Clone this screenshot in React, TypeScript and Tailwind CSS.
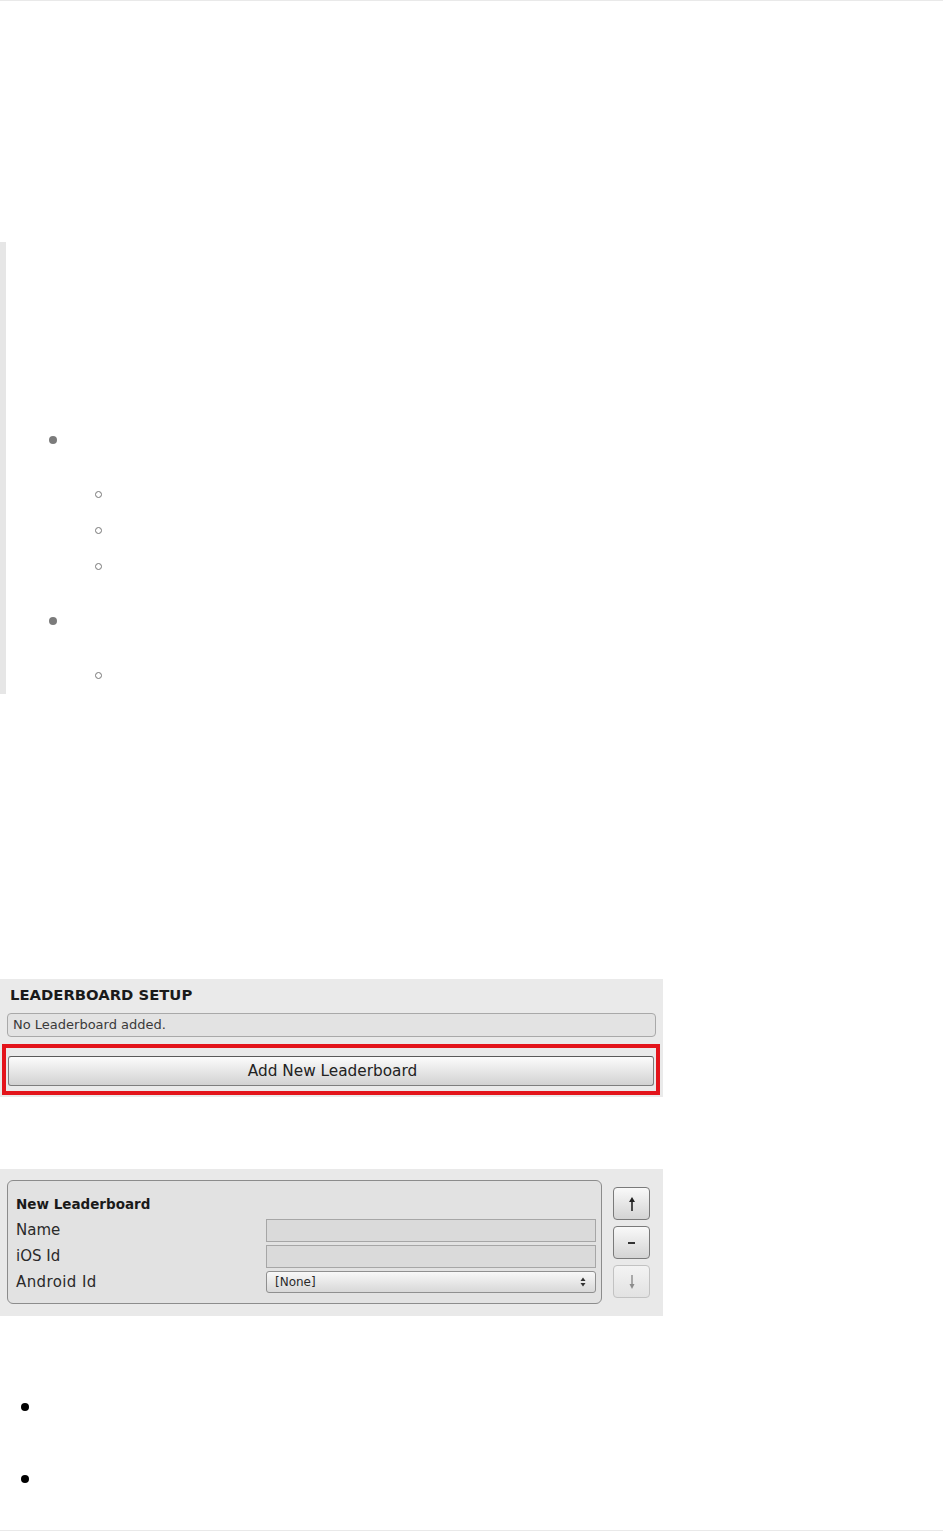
import React from "react";

function Dot({ hollow, color }: { hollow?: boolean; color: string }) {
  if (hollow) {
    return <span className={`block h-[7px] w-[7px] rounded-full border ${color}`} />;
  }
  return <span className={`block h-[8px] w-[8px] rounded-full ${color}`} />;
}

function QuoteList() {
  const sub = (n: number) =>
    Array.from({ length: n }).map((_, i) => (
      <li key={i} className="flex h-9 items-center pl-[89px]">
        <Dot hollow color="border-[#777777]" />
      </li>
    ));
  return (
    <blockquote className="mt-[241px] h-[452px] border-l-[6px] border-[#e6e6e6] pt-[180px]">
      <ul className="flex flex-col">
        <li>
          <div className="flex h-9 items-center pl-[43px]">
            <Dot color="bg-[#7b7b7b]" />
          </div>
          <ul className="mt-[18px] flex flex-col">{sub(3)}</ul>
        </li>
        <li className="mt-[19px]">
          <div className="flex h-9 items-center pl-[43px]">
            <Dot color="bg-[#7b7b7b]" />
          </div>
          <ul className="mt-[18px] flex flex-col">{sub(1)}</ul>
        </li>
      </ul>
    </blockquote>
  );
}

function SetupPanel() {
  return (
    <div className="mt-[285px] h-[118px] w-[663px] bg-[#eaeaea] pt-[6px]">
      <div className="ml-[10px] h-[20px] text-[14.8px] font-bold leading-[20px] text-[#1a1a1a]">
        LEADERBOARD SETUP
      </div>
      <div className="ml-[7px] mt-[8px] flex h-[24px] w-[649px] items-center rounded-[4px] border border-[#a9a9a9] bg-[#e3e3e3] pl-[5px] text-[13px] text-[#3a3a3a]">
        No Leaderboard added.
      </div>
      <div className="ml-[2px] mt-[7px] h-[51px] w-[658px] border-[4px] border-[#e3141b] px-[2px] pt-[8px]">
        <button
          type="button"
          className="flex h-[30px] w-full items-center justify-center rounded-[3px] border border-[#7d7d7d] border-t-[#5a5a5a] bg-gradient-to-b from-[#fcfcfc] to-[#d2d2d2] pl-[3px] text-[15.3px] text-[#222]"
        >
          Add New Leaderboard
        </button>
      </div>
    </div>
  );
}

function ArrowUp() {
  const c = "#222";
  return (
    <svg width="10" height="16" viewBox="0 0 10 16">
      <path d="M5 15V4" stroke={c} strokeWidth="1.6" />
      <path d="M2 6L5 1L8 6Z" fill={c} />
    </svg>
  );
}

function ArrowDown() {
  const c = "#8c8c8c";
  return (
    <svg width="10" height="16" viewBox="0 0 10 16">
      <path d="M5 1V12" stroke={c} strokeWidth="1.4" />
      <path d="M2.5 10L5 15L7.5 10Z" fill={c} />
    </svg>
  );
}

function EntryPanel() {
  const field = "h-[23px] w-[330px] border border-[#a6a6a6] bg-[#dadada]";
  return (
    <div className="mt-[72px] flex h-[147px] w-[663px] items-start bg-[#e9e9e9] pl-[7px] pt-[11px]">
      <div className="h-[124px] w-[595px] rounded-[6px] border border-[#8c8c8c] bg-[#e2e2e2] pl-[8px] pt-[10px] text-[15px] text-[#2a2a2a]">
        <div className="flex h-[26px] items-center text-[13.5px] font-bold text-[#1a1a1a]">New Leaderboard</div>
        <div className="flex h-[26px] items-center">
          <span className="w-[250px]">Name</span>
          <div className={field} />
        </div>
        <div className="flex h-[26px] items-center">
          <span className="w-[250px]">iOS Id</span>
          <div className={field} />
        </div>
        <div className="flex h-[26px] items-center">
          <span className="w-[250px] tracking-[0.4px]">Android Id</span>
          <div className="flex h-[22px] w-[330px] items-center justify-between rounded-[3px] border border-[#8f8f8f] bg-gradient-to-b from-[#f8f8f8] to-[#d8d8d8] pl-[8px] pr-[9px] text-[12px] text-[#2a2a2a]">
            <span>[None]</span>
            <svg width="6" height="10" viewBox="0 0 6 10">
              <path d="M0.5 4L3 0.5L5.5 4Z" fill="#333" />
              <path d="M0.5 6L3 9.5L5.5 6Z" fill="#333" />
            </svg>
          </div>
        </div>
      </div>
      <div className="ml-[11px] mt-[7px] flex flex-col gap-[6px]">
        <div className="flex h-[33px] w-[37px] items-center justify-center rounded-[4px] border border-[#7a7a7a] bg-gradient-to-b from-[#f9f9f9] to-[#d4d4d4]">
          <ArrowUp />
        </div>
        <div className="flex h-[33px] w-[37px] items-center justify-center rounded-[4px] border border-[#7a7a7a] bg-gradient-to-b from-[#f9f9f9] to-[#d4d4d4]">
          <span className="block h-[2px] w-[7px] bg-[#333]" />
        </div>
        <div className="flex h-[33px] w-[37px] items-center justify-center rounded-[4px] border border-[#c2c2c2] bg-gradient-to-b from-[#f3f3f3] to-[#e2e2e2]">
          <ArrowDown />
        </div>
      </div>
    </div>
  );
}

export default function App() {
  return (
    <div className="flex min-h-[1532px] w-[943px] flex-col border-t border-[#e9e9e9] bg-white font-['DejaVu_Sans',sans-serif]">
      <QuoteList />
      <SetupPanel />
      <EntryPanel />
      <ul className="mt-[73px] flex flex-col gap-[36px]">
        <li className="flex h-9 items-center pl-[21px]">
          <Dot color="bg-black" />
        </li>
        <li className="flex h-9 items-center pl-[21px]">
          <Dot color="bg-black" />
        </li>
      </ul>
      <div className="h-[34px] border-b border-[#e9e9e9]" />
    </div>
  );
}
